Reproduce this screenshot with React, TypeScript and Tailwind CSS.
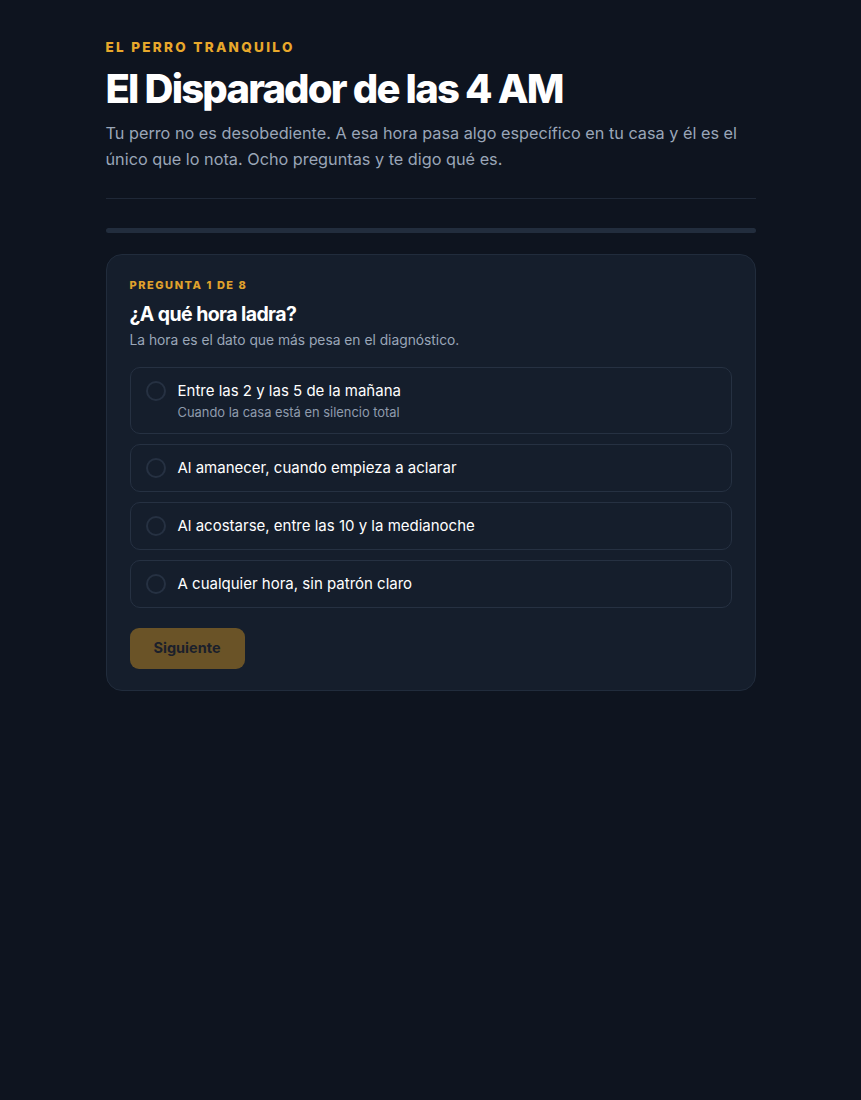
import React, { useState } from 'react';

const OPTIONS = [
  { label: 'Entre las 2 y las 5 de la mañana', hint: 'Cuando la casa está en silencio total' },
  { label: 'Al amanecer, cuando empieza a aclarar' },
  { label: 'Al acostarse, entre las 10 y la medianoche' },
  { label: 'A cualquier hora, sin patrón claro' },
];

const App: React.FC = () => {
  const [selected, setSelected] = useState<number | null>(null);

  return (
    <div className="min-h-[1100px] bg-[#0e141f] font-['Inter','Noto_Sans',sans-serif] text-white">
      <div className="mx-auto max-w-[650px] pt-[37px]">
        <p className="text-[13.5px] font-extrabold uppercase tracking-[0.17em] text-[#e8a82b]">El Perro Tranquilo</p>
        <h1 className="mt-[8px] text-[40px] font-extrabold leading-[48px] tracking-[-0.045em] text-white">
          El Disparador de las 4 AM
        </h1>
        <p className="mt-[7px] text-[16.25px] leading-[26px] text-[#9aa6b8]">
          Tu perro no es desobediente. A esa hora pasa algo específico en tu casa y él es el único que lo nota. Ocho
          preguntas y te digo qué es.
        </p>

        <div className="mt-[26px] h-px bg-[#1f2837]" />

        <div className="mt-[29px] h-[5px] rounded-full bg-[#222d3d]" />

        <div className="mt-[21px] rounded-2xl border border-[#212c3c] bg-[#151e2c] px-[23px] pt-[22px] pb-[21px]">
          <p className="text-[11px] font-extrabold uppercase tracking-[0.14em] text-[#e0a22c]">Pregunta 1 de 8</p>
          <h2 className="mt-[5px] text-[19.5px] font-bold leading-[30px] tracking-[-0.03em] text-white">¿A qué hora ladra?</h2>
          <p className="mt-px text-[13.8px] leading-[20px] text-[#9aa6b8]">La hora es el dato que más pesa en el diagnóstico.</p>

          <div className="mt-[17px] flex flex-col gap-[10px]">
            {OPTIONS.map((opt, i) => (
              <button
                key={i}
                onClick={() => setSelected(i)}
                className={`flex min-h-[48px] items-start gap-3 rounded-[10px] border px-[15px] py-[11px] text-left ${
                  selected === i ? 'border-[#e8a82b] bg-[#1b2433]' : 'border-[#263142] bg-[#151e2c]'
                }`}
              >
                <span
                  className={`mt-[2px] h-5 w-5 shrink-0 rounded-full border-2 ${
                    selected === i ? 'border-[#e8a82b] bg-[#e8a82b]' : 'border-[#263142]'
                  }`}
                />
                <span className="flex flex-col">
                  <span className="text-[15px] leading-[24px] text-white">{opt.label}</span>
                  {opt.hint && <span className="text-[12.9px] leading-[19px] text-[#8f9bad]">{opt.hint}</span>}
                </span>
              </button>
            ))}
          </div>

          <button className="mt-[20px] h-[41px] rounded-[9px] bg-[#6a5327] px-6 text-[14.5px] font-bold text-[#1b202b]">
            Siguiente
          </button>
        </div>
      </div>
    </div>
  );
};

export default App;
